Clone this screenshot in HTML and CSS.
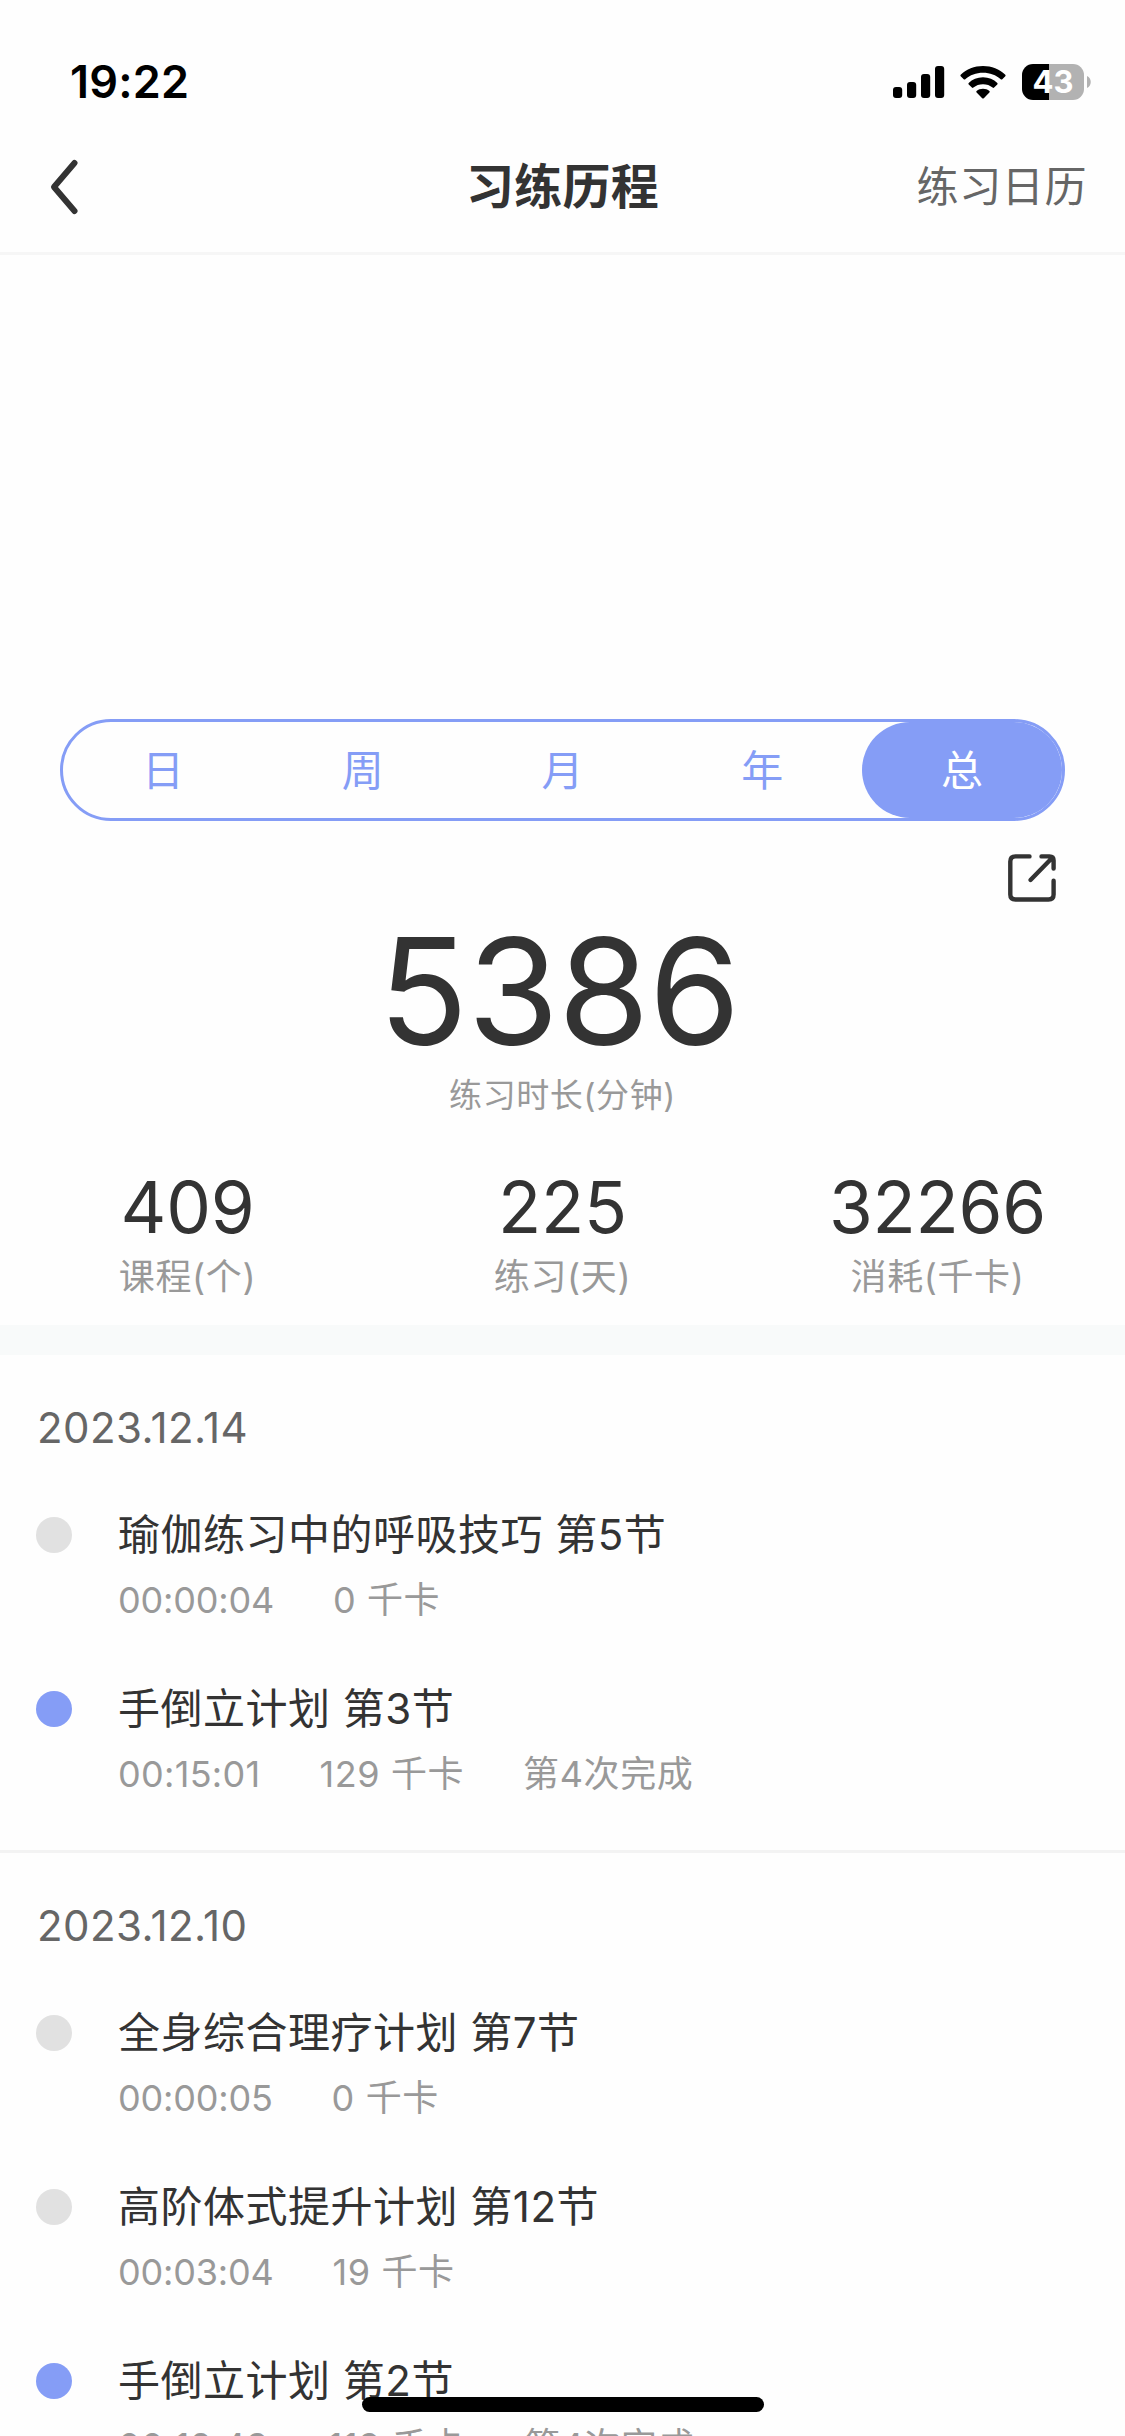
FILE: index.html
```html
<!DOCTYPE html>
<html lang="zh-CN">
<head>
<meta charset="utf-8">
<title>习练历程</title>
<link rel="stylesheet" href="styles.css">
</head>
<body>
<div class="screen">
  <div class="status-bar">
    <span class="clock">19:22</span>
    <div class="status-icons">
      <svg class="signal" width="52" height="32" viewBox="0 0 52 32"><rect x="0" y="21" width="9.2" height="11" rx="3"/><rect x="14" y="16" width="9.2" height="16" rx="3"/><rect x="28" y="8" width="9.2" height="24" rx="3"/><rect x="42" y="0" width="9.2" height="32" rx="3"/></svg>
      <svg class="wifi" width="46" height="33" viewBox="0 0 46 33"><path d="M23 0C31.700 0 39.500 3.200 45.300 8.700Q46 9.500 45.300 10.200L42.300 13.200Q41.500 13.900 40.700 13.200C36 8.900 29.900 6.700 23 6.700S10 8.900 5.300 13.200Q4.500 13.900 3.700 13.200L.7 10.200Q0 9.500 .7 8.700C6.500 3.200 14.300 0 23 0Z"/><path d="M23 11.300C28.700 11.300 33.700 13.400 37.300 16.900Q38 17.700 37.300 18.500L34.100 21.600Q33.400 22.300 32.600 21.600C30 19.400 26.700 18.200 23 18.200S16 19.400 13.400 21.600Q12.600 22.300 11.900 21.600L8.700 18.500Q8 17.700 8.700 16.900C12.300 13.400 17.300 11.300 23 11.300Z"/><path d="M23 22.700C25.500 22.700 27.700 23.600 29.400 25Q30.200 25.800 29.400 26.600L23.800 32.200Q23 33 22.200 32.200L16.600 26.600Q15.800 25.800 16.600 25C18.300 23.600 20.500 22.700 23 22.700Z"/></svg>
      <div class="battery"><span class="battery-level">43</span><svg class="battery-cap" width="4" height="12" viewBox="0 0 4 12"><path d="M0 0C5 2 5 10 0 12Z"/></svg></div>
    </div>
  </div>
  <header class="nav-bar">
    <svg class="back" width="30" height="58" viewBox="0 0 30 58"><path d="M25.500 5L5 29L25.500 53"/></svg>
    <h1 class="nav-title">习练历程</h1>
    <span class="nav-action">练习日历</span>
  </header>
  <main>
    <section class="summary">
      <div class="tabs">
        <span class="tab">日</span><span class="tab">周</span><span class="tab">月</span><span class="tab">年</span><span class="tab active">总</span>
      </div>
      <div class="share-row">
        <svg width="48" height="48" viewBox="0 0 48 48"><path d="M21.500 2.400H7.500Q2.300 2.400 2.300 7.500V40.500Q2.300 45.500 7.500 45.500H40.500Q45.600 45.500 45.600 40.500V26.700"/><path d="M33.500 2.400H41.500Q45.600 2.400 45.600 6.500V14.500M44.500 3.500L22.500 26"/></svg>
      </div>
      <div class="total">5386</div>
      <div class="total-label">练习时长(分钟)</div>
      <div class="stats">
        <div class="stat"><span class="stat-value">409</span><span class="stat-label">课程(个)</span></div>
        <div class="stat"><span class="stat-value">225</span><span class="stat-label">练习(天)</span></div>
        <div class="stat"><span class="stat-value">32266</span><span class="stat-label">消耗(千卡)</span></div>
      </div>
    </section>
    <section class="day">
      <h2 class="date">2023.12.14</h2>
      <article class="entry"><i class="dot"></i><div class="body"><h3 class="name">瑜伽练习中的呼吸技巧 第5节</h3><p class="meta"><span class="time">00:00:04</span><span>0 千卡</span></p></div></article>
      <article class="entry"><i class="dot done"></i><div class="body"><h3 class="name">手倒立计划 第3节</h3><p class="meta"><span class="time wide">00:15:01</span><span>129 千卡</span><span>第4次完成</span></p></div></article>
    </section>
    <section class="day">
      <h2 class="date">2023.12.10</h2>
      <article class="entry"><i class="dot"></i><div class="body"><h3 class="name">全身综合理疗计划 第7节</h3><p class="meta"><span class="time">00:00:05</span><span>0 千卡</span></p></div></article>
      <article class="entry"><i class="dot"></i><div class="body"><h3 class="name">高阶体式提升计划 第12节</h3><p class="meta"><span class="time">00:03:04</span><span>19 千卡</span></p></div></article>
      <article class="entry"><i class="dot done"></i><div class="body"><h3 class="name">手倒立计划 第2节</h3><p class="meta"><span class="time wide">00:12:43</span><span>119 千卡</span><span>第4次完成</span></p></div></article>
    </section>
  </main>
  <div class="home-indicator"></div>
</div>
</body>
</html>
```
FILE: styles.css
```css
* { box-sizing: border-box; margin: 0; padding: 0; }
body {
  background: #fefefe;
  color: #333;
  font-family: Inter, "Noto Sans CJK SC", sans-serif;
}
.screen {
  position: relative;
  width: 1125px;
  height: 2436px;
  overflow: hidden;
}

/* status bar */
.status-bar {
  display: flex;
  justify-content: space-between;
  align-items: center;
  height: 132px;
  padding: 32px 34px 0 70px;
  color: #000;
}
.clock { font-size: 45px; font-weight: 600; line-height: 60px; letter-spacing: 0.2px; }
.status-icons { display: flex; align-items: center; }
.wifi { margin-left: 15px; }
.battery { display: flex; align-items: center; gap: 3px; margin-left: 16px; }
.battery-level {
  width: 62px;
  height: 36px;
  border-radius: 11px;
  background: linear-gradient(90deg, #000 27px, #b2b2b2 27px);
  color: #fff;
  font-size: 31px;
  font-weight: 700;
  line-height: 36px;
  text-align: center;
}
.battery-cap { fill: #b2b2b2; }

/* navigation */
.nav-bar {
  display: grid;
  grid-template-columns: 1fr auto 1fr;
  align-items: center;
  height: 123px;
  padding: 0 38px 10px;
  border-bottom: 3px solid #f6f6f6;
}
.back { margin-left: 11px; fill: none; stroke: #333; stroke-width: 6; stroke-linecap: round; stroke-linejoin: round; }
.nav-title { font-size: 48px; font-weight: 700; line-height: 60px; letter-spacing: 0.3px; }
.nav-action { justify-self: end; color: #666; font-size: 42px; line-height: 60px; letter-spacing: 0.6px; }

/* summary */
.summary {
  height: 1100px;
  padding-top: 464px;
  border-bottom: 30px solid #f8fafa;
}
.tabs {
  display: grid;
  grid-template-columns: repeat(5, 1fr);
  height: 102px;
  margin: 0 60px;
  border: 3px solid #859df6;
  border-radius: 51px;
}
.tab {
  color: #859df6;
  font-size: 42px;
  line-height: 98px;
  height: 96px;
  text-align: center;
  border-radius: 48px;
}
.tab.active { background: #859df6; color: #fff; }
.share-row {
  display: flex;
  justify-content: flex-end;
  height: 81px;
  padding: 33px 69px 0 0;
}
.share-row svg { fill: none; stroke: #333; stroke-width: 4.4; stroke-linecap: round; stroke-linejoin: round; }
.total {
  height: 177px;
  padding-right: 7px;
  font-size: 148px;
  line-height: 179px;
  letter-spacing: -0.8px;
  text-align: center;
}
.total-label {
  height: 93px;
  color: #999;
  font-size: 33px;
  line-height: 32px;
  letter-spacing: 0.6px;
  text-align: center;
}
.stats { display: grid; grid-template-columns: repeat(3, 1fr); }
.stat { display: flex; flex-direction: column; align-items: center; }
.stat-value { font-size: 71px; line-height: 70px; letter-spacing: -0.3px; }
.stat-label { color: #999; font-size: 36px; line-height: 70px; letter-spacing: 0.6px; }

/* history */
.day { height: 498px; padding: 43px 36px 0; border-bottom: 3px solid #f3f3f3; }
.day:last-child { height: auto; border-bottom: 0; }
.date { height: 106px; padding-left: 1px; color: #666; font-size: 42px; font-weight: 400; line-height: 60px; letter-spacing: 0.45px; }
.entry { display: flex; align-items: flex-start; gap: 46px; height: 174px; }
.dot { flex: none; width: 36px; height: 36px; margin-top: 13px; border-radius: 50%; background: #e1e1e1; }
.done { background: #859df6; }
.name { font-size: 42px; font-weight: 400; line-height: 62px; letter-spacing: 0.5px; white-space: nowrap; }
.meta { display: flex; gap: 59px; padding-top: 4px; color: #999; font-size: 36px; line-height: 60px; letter-spacing: 0.6px; white-space: nowrap; }
.time { letter-spacing: -0.2px; }
.wide { letter-spacing: 0.3px; }

.home-indicator {
  position: absolute;
  left: 362px;
  top: 2397px;
  width: 402px;
  height: 15px;
  border-radius: 8px;
  background: #000;
}
```
